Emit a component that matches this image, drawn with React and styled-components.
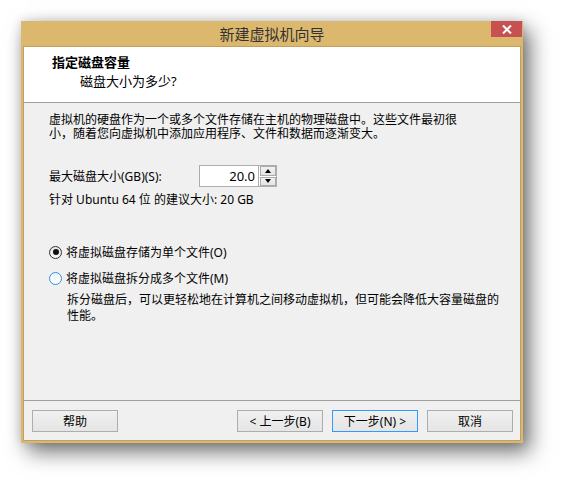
import React from 'react';
import styled, { createGlobalStyle } from 'styled-components';

const GlobalStyle = createGlobalStyle`
  html, body {
    margin: 0;
    padding: 0;
    background: #fff;
  }
  body {
    font-family: "Noto Sans", "Noto Sans CJK SC", sans-serif;
    font-size: 12px;
    color: #000;
  }
`;

const Page = styled.div`
  width: 566px;
  height: 485px;
  padding: 21px 0 0 21px;
  box-sizing: border-box;
`;

const Window = styled.div`
  position: relative;
  width: 502px;
  height: 422px;
  display: flex;
  flex-direction: column;
  background: #dcb86f;
  box-shadow: 0 0 10px rgba(0, 0, 0, 0.15), 7px 9px 20px rgba(0, 0, 0, 0.55);
`;

const TitleBar = styled.div`
  height: 25px;
  display: flex;
  align-items: center;
  justify-content: center;
  font-family: "Noto Sans CJK SC", sans-serif;
  font-size: 15px;
  color: #333;
`;

const CloseButton = styled.div`
  position: absolute;
  top: 0;
  right: 1px;
  width: 31px;
  height: 16px;
  background: #c75050;
  display: flex;
  align-items: center;
  justify-content: center;
`;

const Client = styled.div`
  flex: 1;
  margin: 0 2px 2px;
  border: 1px solid #c29f5c;
  background: #f0f0f0;
  display: flex;
  flex-direction: column;
`;

const Header = styled.div`
  height: 56px;
  box-sizing: border-box;
  background: #fff;
  border-bottom: 1px solid #a0a0a0;
  padding: 7px 0 0 28px;
`;

const HeaderTitle = styled.div`
  font-size: 13px;
  font-weight: bold;
  line-height: 16px;
`;

const HeaderSub = styled.div`
  font-size: 13px;
  line-height: 16px;
  margin: 3px 0 0 28px;
`;

const Body = styled.div`
  flex: 1;
  padding: 10px 0 0 25px;
`;

const Paragraph = styled.div`
  line-height: 14px;
  white-space: nowrap;
`;

const SizeRow = styled.div`
  display: flex;
  align-items: center;
  height: 22px;
  margin-top: 24px;
`;

const SizeLabel = styled.div`
  width: 150px;
`;

const SpinBox = styled.div`
  width: 78px;
  height: 22px;
  box-sizing: border-box;
  border: 1px solid #abadb3;
  background: #fff;
  display: flex;
`;

const SpinValue = styled.div`
  flex: 1;
  display: flex;
  align-items: center;
  justify-content: flex-end;
  padding-right: 3px;
  font-size: 13px;
  border-right: 1px solid #abadb3;
`;

const SpinButtons = styled.div`
  width: 17px;
  display: flex;
  flex-direction: column;
  gap: 1px;
  padding: 0 0 0 1px;
  box-sizing: border-box;
`;

const SpinButton = styled.div`
  flex: 1;
  border: 1px solid #acacac;
  background: linear-gradient(#f2f2f2, #e3e3e3);
  display: flex;
  align-items: center;
  justify-content: center;
`;

const Arrow = styled.div`
  width: 0;
  height: 0;
  border-left: 3.5px solid transparent;
  border-right: 3.5px solid transparent;
  ${p => (p.$down ? 'border-top: 4px solid #000;' : 'border-bottom: 4px solid #000;')}
`;

const Hint = styled.div`
  line-height: 16px;
  margin-top: 5px;
`;

const RadioRow = styled.div`
  display: flex;
  align-items: center;
  gap: 4px;
  height: 16px;
  margin-top: ${p => p.$gap}px;
`;

const RadioDot = styled.span`
  width: 13px;
  height: 13px;
  box-sizing: border-box;
  border-radius: 50%;
  display: flex;
  align-items: center;
  justify-content: center;
  border: 1px solid ${p => (p.$checked ? '#333' : '#3c8fd8')};
  background: ${p => (p.$checked ? 'linear-gradient(#e6e6e6, #f8f8f8)' : 'linear-gradient(#eaf4fc, #fff)')};

  &::after {
    content: '';
    display: ${p => (p.$checked ? 'block' : 'none')};
    width: 6px;
    height: 6px;
    border-radius: 50%;
    background: #111;
  }
`;

const Note = styled.div`
  margin: 6px 0 0 18px;
  line-height: 16px;
  white-space: nowrap;
`;

const Footer = styled.div`
  height: 40px;
  box-sizing: border-box;
  border-top: 1px solid #a0a0a0;
  padding: 9px 7px 0 8px;
  display: flex;
  gap: 9px;
`;

const Button = styled.div`
  width: 86px;
  height: 22px;
  box-sizing: border-box;
  border: 1px solid ${p => (p.$default ? '#3399ff' : '#adadad')};
  background: linear-gradient(#f0f0f0, #e5e5e5);
  display: flex;
  align-items: center;
  justify-content: center;
  font-size: 12px;
  margin-left: ${p => (p.$push ? 'auto' : '0')};
`;

export default function App() {
  return (
    <Page>
      <GlobalStyle />
      <Window>
        <TitleBar>新建虚拟机向导</TitleBar>
        <CloseButton>
          <svg width="10" height="9" viewBox="0 0 10 9">
            <path d="M1 0.5 L9 8.5 M9 0.5 L1 8.5" stroke="#fff" strokeWidth="2" />
          </svg>
        </CloseButton>
        <Client>
          <Header>
            <HeaderTitle>指定磁盘容量</HeaderTitle>
            <HeaderSub>磁盘大小为多少?</HeaderSub>
          </Header>
          <Body>
            <Paragraph>
              虚拟机的硬盘作为一个或多个文件存储在主机的物理磁盘中。这些文件最初很
              <br />
              小，随着您向虚拟机中添加应用程序、文件和数据而逐渐变大。
            </Paragraph>
            <SizeRow>
              <SizeLabel>最大磁盘大小(GB)(S):</SizeLabel>
              <SpinBox>
                <SpinValue>20.0</SpinValue>
                <SpinButtons>
                  <SpinButton><Arrow /></SpinButton>
                  <SpinButton><Arrow $down /></SpinButton>
                </SpinButtons>
              </SpinBox>
            </SizeRow>
            <Hint>针对 Ubuntu 64 位 的建议大小: 20 GB</Hint>
            <RadioRow $gap={36}>
              <RadioDot $checked />
              将虚拟磁盘存储为单个文件(O)
            </RadioRow>
            <RadioRow $gap={10}>
              <RadioDot />
              将虚拟磁盘拆分成多个文件(M)
            </RadioRow>
            <Note>
              拆分磁盘后，可以更轻松地在计算机之间移动虚拟机，但可能会降低大容量磁盘的
              <br />
              性能。
            </Note>
          </Body>
          <Footer>
            <Button>帮助</Button>
            <Button $push>&lt; 上一步(B)</Button>
            <Button $default>下一步(N) &gt;</Button>
            <Button>取消</Button>
          </Footer>
        </Client>
      </Window>
    </Page>
  );
}
